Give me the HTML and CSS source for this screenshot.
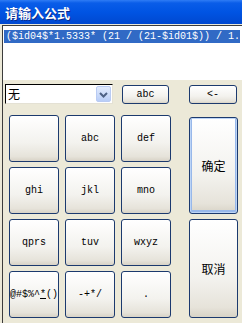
FILE: index.html
```html
<!doctype html>
<html>
	<head>
		<title>请输入公式</title>
		<meta charset="utf-8" />
		<link rel="stylesheet" href="styles.css">
	</head>
	<body>
		<div class="title">请输入公式</div>
		<div class="client">
			<div class="expr">
				<span class="sel">($id04$*1.5333* (21 / (21-$id01$)) / 1.</span>
			</div>
			<div class="tools">
				<div class="combo">
					<span class="combo-text">无</span>
					<span class="drop">
						<svg width="13" height="15" viewBox="0 0 13 15">
							<path d="M3 6 L6.5 9.5 L10 6" fill="none" stroke="#4d6185" stroke-width="2"/>
						</svg>
					</span>
				</div>
				<button class="btn abc">abc</button>
				<button class="btn back">&lt;-</button>
			</div>
			<div class="pad">
				<button class="btn key"></button>
				<button class="btn key">abc</button>
				<button class="btn key">def</button>
				<button class="btn big ok">确定</button>
				<button class="btn key">ghi</button>
				<button class="btn key">jkl</button>
				<button class="btn key">mno</button>
				<button class="btn key">qprs</button>
				<button class="btn key">tuv</button>
				<button class="btn key">wxyz</button>
				<button class="btn big cancel">取消</button>
				<button class="btn key">@#$%^<u>*</u>()</button>
				<button class="btn key">-+*/</button>
				<button class="btn key">.</button>
			</div>
		</div>
	</body>
</html>
```

FILE: styles.css
```css
* { margin: 0; padding: 0; box-sizing: border-box; }
body { width: 242px; height: 323px; overflow: hidden; background: #ece9d8; font-family: "Liberation Mono", monospace; }

.title { height: 24px; padding-left: 5px; color: #fff; font: bold 13px/25px "Noto Sans CJK SC", sans-serif; text-shadow: 1px 1px 0 #0b2a8a; background: linear-gradient(#2f7cf5 0, #0a5de8 3px, #0054e3 50%, #0048d0 100%); }

.client { margin-left: 2px; height: 299px; border-left: 1px solid #3c3c3c; }

.expr { height: 55px; margin-top: 1px; padding-top: 4px; border-top: 1px solid #3c3c3c; background: #fff; overflow: hidden; white-space: nowrap; font-size: 10px; line-height: 13px; }
.sel { display: block; margin-left: 1px; margin-right: 2px; padding-left: 2px; background: #316ac5; color: #fff; }

.tools { display: flex; align-items: flex-start; margin-top: 4px; height: 21px; }
.combo { display: flex; align-items: center; justify-content: space-between; margin-left: 2px; width: 108px; height: 20px; background: #fff; border-top: 1px solid #000; border-left: 1px solid #000; border-right: 1px solid #e4e1d4; border-bottom: 1px solid #e4e1d4; }
.combo-text { padding-left: 2px; font: 12px/16px "Noto Sans CJK SC", sans-serif; color: #000; }
.drop { display: flex; align-items: center; justify-content: center; width: 15px; height: 16px; margin-right: 1px; border: 1px solid #b9cbf3; border-radius: 2px; background: linear-gradient(#e2ebfd, #b8cdf7); }

.btn { padding: 0; white-space: nowrap; border: 1px solid #1c3a6e; border-radius: 3px; background: linear-gradient(#ffffff, #f3f2ee 60%, #e6e3da 90%, #d8d3c6); font-family: "Liberation Mono", monospace; font-size: 10px; color: #000; }
.btn u { text-decoration: underline; }
.abc { margin-left: 9px; margin-top: 1px; width: 47px; height: 19px; }
.back { margin-left: 20px; margin-top: 1px; width: 48px; height: 19px; }

.pad { display: grid; grid-template-columns: 50px 50px 50px 61px; grid-template-rows: repeat(4, 47px); column-gap: 6px; row-gap: 5px; margin-top: 10px; margin-left: 6px; }
.key { width: 50px; height: 47px; }
.big { margin-left: 12px; width: 49px; font: 12px "Noto Sans CJK SC", sans-serif; }
.ok { grid-column: 4; grid-row: 1 / span 2; margin-top: 2px; box-shadow: inset 0 0 0 1px #bcd4f6, inset 0 -1px 0 2px #98b8ea; }
.cancel { grid-column: 4; grid-row: 3 / span 2; }
```
